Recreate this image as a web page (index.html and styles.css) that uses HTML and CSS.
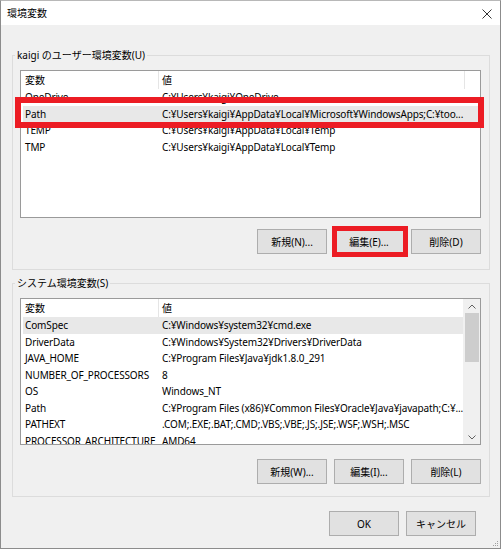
FILE: index.html
```html
<!DOCTYPE html>
<html lang="ja">
<head>
<meta charset="utf-8">
<title>環境変数</title>
<link rel="stylesheet" href="styles.css">
</head>
<body>
<div class="window">
  <div class="titlebar">
    <span class="title">環境変数</span>
    <svg class="close" width="10" height="10" viewBox="0 0 10 10"><path d="M0.5 0.5 L9.5 9.5 M9.5 0.5 L0.5 9.5" stroke="#333" stroke-width="1" fill="none"/></svg>
  </div>

  <fieldset class="group group-user">
    <legend>kaigi のユーザー環境変数(U)</legend>
    <div class="list list-user">
      <div class="list-body">
        <div class="list-head">
          <div class="hcell">変数</div>
          <div class="hcell">値</div>
        </div>
        <div class="row"><div class="cell">OneDrive</div><div class="cell val">C:¥Users¥kaigi¥OneDrive</div></div>
        <div class="row selected"><div class="cell">Path</div><div class="cell val">C:¥Users¥kaigi¥AppData¥Local¥Microsoft¥WindowsApps;C:¥too...</div></div>
        <div class="row"><div class="cell">TEMP</div><div class="cell val">C:¥Users¥kaigi¥AppData¥Local¥Temp</div></div>
        <div class="row"><div class="cell">TMP</div><div class="cell val">C:¥Users¥kaigi¥AppData¥Local¥Temp</div></div>
      </div>
      <div class="mark mark-row"></div>
    </div>
    <div class="btnrow">
      <button class="btn">新規(N)...</button>
      <button class="btn marked">編集(E)...<span class="mark mark-btn"></span></button>
      <button class="btn">削除(D)</button>
    </div>
  </fieldset>

  <fieldset class="group group-sys">
    <legend>システム環境変数(S)</legend>
    <div class="list list-sys">
      <div class="list-body">
        <div class="list-head">
          <div class="hcell">変数</div>
          <div class="hcell">値</div>
        </div>
        <div class="row selected"><div class="cell">ComSpec</div><div class="cell val">C:¥Windows¥system32¥cmd.exe</div></div>
        <div class="row"><div class="cell">DriverData</div><div class="cell val">C:¥Windows¥System32¥Drivers¥DriverData</div></div>
        <div class="row"><div class="cell">JAVA_HOME</div><div class="cell val">C:¥Program Files¥Java¥jdk1.8.0_291</div></div>
        <div class="row"><div class="cell">NUMBER_OF_PROCESSORS</div><div class="cell val">8</div></div>
        <div class="row"><div class="cell">OS</div><div class="cell val">Windows_NT</div></div>
        <div class="row"><div class="cell">Path</div><div class="cell val">C:¥Program Files (x86)¥Common Files¥Oracle¥Java¥javapath;C:¥...</div></div>
        <div class="row"><div class="cell">PATHEXT</div><div class="cell val">.COM;.EXE;.BAT;.CMD;.VBS;.VBE;.JS;.JSE;.WSF;.WSH;.MSC</div></div>
        <div class="row"><div class="cell">PROCESSOR_ARCHITECTURE</div><div class="cell val">AMD64</div></div>
      </div>
      <div class="scrollbar">
        <div class="sb-btn"><svg width="8" height="5" viewBox="0 0 8 5"><path d="M0.5 4.5 L4 1 L7.5 4.5" stroke="#606060" stroke-width="1" fill="none"/></svg></div>
        <div class="sb-thumb"></div>
        <div class="sb-track"></div>
        <div class="sb-btn"><svg width="8" height="5" viewBox="0 0 8 5"><path d="M0.5 0.5 L4 4 L7.5 0.5" stroke="#606060" stroke-width="1" fill="none"/></svg></div>
      </div>
    </div>
    <div class="btnrow btnrow-sys">
      <button class="btn">新規(W)...</button>
      <button class="btn">編集(I)...</button>
      <button class="btn">削除(L)</button>
    </div>
  </fieldset>

  <div class="footer">
    <button class="btn btn-ok">OK</button>
    <button class="btn btn-ok">キャンセル</button>
  </div>
  <svg class="grip" width="6" height="6" viewBox="0 0 6 6">
    <rect x="4" y="0" width="1" height="1" fill="#a0a0a0"/>
    <rect x="2" y="2" width="1" height="1" fill="#a0a0a0"/>
    <rect x="4" y="2" width="1" height="1" fill="#a0a0a0"/>
    <rect x="0" y="4" width="1" height="1" fill="#a0a0a0"/>
    <rect x="2" y="4" width="1" height="1" fill="#a0a0a0"/>
    <rect x="4" y="4" width="1" height="1" fill="#a0a0a0"/>
  </svg>
</div>
</body>
</html>
```

FILE: styles.css
```css
html, body {
  margin: 0;
  padding: 0;
  background: #f0f0f0;
}

body {
  font-family: "Noto Sans", "Noto Sans CJK JP", sans-serif;
  font-size: 10px;
  color: #000;
}

.window {
  position: relative;
  width: 501px;
  height: 549px;
  box-sizing: border-box;
  border: 1px solid #8c8c8c;
  border-top-color: #b8b8b8;
  background: #f0f0f0;
  display: flex;
  flex-direction: column;
}

.titlebar {
  height: 24px;
  flex: none;
  background: #fff;
  display: flex;
  align-items: center;
  justify-content: space-between;
  padding: 0 8px 0 6px;
}

.title {
  font-size: 10px;
  line-height: 14px;
}

.close {
  display: block;
  margin-top: 2px;
}

.group {
  flex: none;
  border: 1px solid #dcdcdc;
  margin: 0 10px 0 11px;
  padding: 8px 8px 15px 7px;
  min-width: 0;
}

.group-user {
  margin-top: 23px;
}

.group-sys {
  margin-top: 6px;
  padding-bottom: 12px;
}

legend {
  margin-left: -5px;
  padding: 0 2px;
  line-height: 14px;
  font-size: 10px;
}

.list {
  position: relative;
  background: #fff;
  border: 1px solid #9a9a9a;
  display: flex;
}

.list-user {
  height: 148px;
  box-sizing: border-box;
}

.list-sys {
  height: 147px;
  box-sizing: border-box;
}

.list-body {
  flex: 1;
  min-width: 0;
  overflow: hidden;
}

.list-head {
  display: grid;
  grid-template-columns: 138px 306px;
  height: 18px;
}

.hcell {
  box-sizing: border-box;
  border-right: 1px solid #e5e5e5;
  padding-left: 4px;
  line-height: 18px;
  white-space: nowrap;
  overflow: hidden;
}

.hcell:nth-child(2) {
  padding-left: 3px;
}

.row {
  display: grid;
  grid-template-columns: 136px 306px;
  margin-left: 2px;
  height: 16.5px;
  line-height: 16.5px;
  letter-spacing: -0.13px;
}

.row.selected {
  background: #e8e8e8;
}

.cell {
  padding-left: 2px;
  white-space: nowrap;
  overflow: hidden;
}

.cell.val {
  padding-left: 3px;
}

.scrollbar {
  flex: none;
  width: 17px;
  background: #f0f0f0;
  display: flex;
  flex-direction: column;
}

.sb-btn {
  height: 14px;
  display: flex;
  align-items: center;
  justify-content: center;
}

.sb-thumb {
  height: 49px;
  margin: 0 1px 0 2px;
  background: #cdcdcd;
}

.sb-track {
  flex: 1;
}

.btnrow {
  display: flex;
  justify-content: flex-end;
  gap: 7px;
  margin-top: 11px;
}

.btnrow-sys {
  margin-top: 14px;
}

.btn {
  position: relative;
  width: 70px;
  height: 25px;
  box-sizing: border-box;
  background: #e1e1e1;
  border: 1px solid #adadad;
  border-radius: 0;
  font-family: "Noto Sans", "Noto Sans CJK JP", sans-serif;
  font-size: 10px;
  color: #000;
  padding: 0;
  margin: 0;
}

.footer {
  display: flex;
  justify-content: flex-end;
  gap: 7px;
  margin-top: 14px;
  padding-right: 24px;
}

.btn-ok {
  width: 70px;
}

.mark {
  position: absolute;
  box-sizing: border-box;
  border: 6px solid #ec1c24;
  pointer-events: none;
}

.mark-row {
  left: -6px;
  top: 26px;
  width: 469px;
  height: 31px;
}

.mark-btn {
  border-width: 5px;
  left: -3px;
  top: -4px;
  width: 76px;
  height: 31px;
}

.grip {
  position: absolute;
  right: 1px;
  bottom: 1px;
}
```
